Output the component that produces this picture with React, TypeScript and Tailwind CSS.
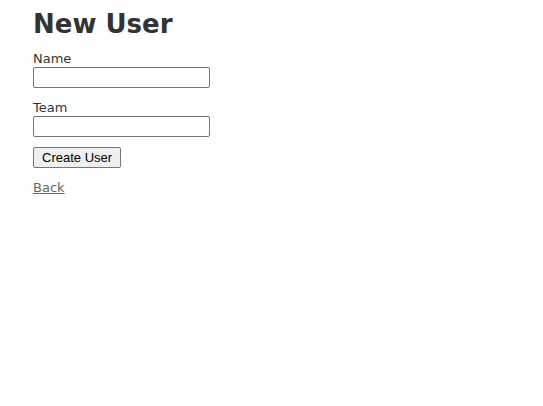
export default function App() {
  return (
    <div className="bg-white min-h-[406px] px-[33px] pt-[8px] text-[#333] font-['DejaVu_Sans',sans-serif]">
      <h1 className="text-[26px] font-bold leading-[32px] mb-[12px]">New User</h1>
      <form className="flex flex-col items-start">
        <label className="text-[13px] leading-[14px]">Name</label>
        <input className="w-[177px] h-[21px] border border-[#767676] rounded-[2px] mt-[1px] mb-[13px] px-1 text-[13px]" />
        <label className="text-[13px] leading-[14px]">Team</label>
        <input className="w-[177px] h-[21px] border border-[#767676] rounded-[2px] mt-[1px] mb-[10px] px-1 text-[13px]" />
        <button
          type="button"
          className="h-[21px] px-[8px] border border-[#767676] rounded-[2px] bg-[#efefef] text-[13px] text-black font-['Liberation_Sans',Arial,sans-serif] leading-[19px]"
        >
          Create User
        </button>
        <a href="#" className="mt-[12px] text-[13px] leading-[16px] text-[#666] underline">
          Back
        </a>
      </form>
    </div>
  );
}
